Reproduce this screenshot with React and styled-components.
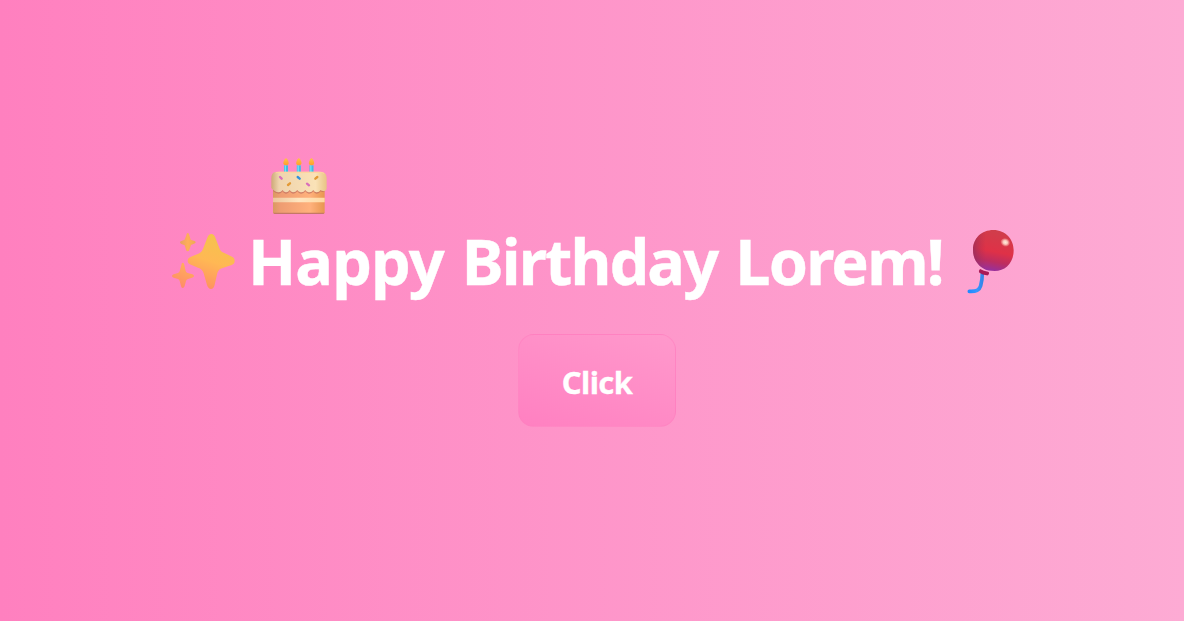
import React from "react";
import styled, { createGlobalStyle } from "styled-components";

const GlobalStyle = createGlobalStyle`
  body {
    margin: 0;
    overflow: hidden;
    font-family: "Noto Sans", "Open Sans", sans-serif;
  }
`;

const Page = styled.main`
  box-sizing: border-box;
  height: 100vh;
  min-height: 621px;
  padding-top: 152px;
  background: linear-gradient(to right, #ff80bf, #fdabd4);
  color: #fff;
`;

const Greeting = styled.section`
  display: flex;
  flex-direction: column;
  width: 860px;
  margin-left: 165px;
`;

const Emoji = styled.svg`
  display: block;
  flex: none;
  width: ${(p) => p.$w}px;
  height: ${(p) => p.$h}px;
  margin-top: ${(p) => p.$raise ? -p.$raise : 0}px;
  margin-left: ${(p) => p.$indent || 0}px;
`;

const Title = styled.h1`
  display: flex;
  align-items: flex-start;
  height: 75px;
  margin: 5px 0 0;
  font-size: 63px;
  font-weight: 700;
  line-height: 72px;
  white-space: nowrap;
`;

const TitleText = styled.span`
  box-sizing: border-box;
  width: 710px;
  padding-left: 3px;
  word-spacing: 1.6px;
  -webkit-text-stroke: 0.4px #fff;
`;

const Word = styled.span`
  letter-spacing: ${(p) => p.$tracking}px;
`;

const Button = styled.button`
  box-sizing: border-box;
  width: 158px;
  height: 93px;
  margin: 34px 0 0 353px;
  padding: 4px 0 0;
  border: 1px solid rgba(255, 128, 191, 0.55);
  border-radius: 16px;
  background: linear-gradient(20deg, #ff80c1, #ff99cc);
  color: #fff;
  font: 700 31px/1 "Noto Sans", "Open Sans", sans-serif;
  letter-spacing: -0.6px;
  -webkit-text-stroke: 0.3px #fff;
  cursor: pointer;
`;

function Cake() {
  return (
    <Emoji $w={70} $h={68} $indent={99} viewBox="0 0 210 204">
      <defs>
        <linearGradient id="sponge">
          <stop offset="0" stopColor="#d99a60" />
          <stop offset=".14" stopColor="#ee9c72" />
          <stop offset=".72" stopColor="#ffb17c" />
          <stop offset="1" stopColor="#e79650" />
        </linearGradient>
        <linearGradient id="icing">
          <stop offset="0" stopColor="#cda978" />
          <stop offset=".14" stopColor="#efd4ae" />
          <stop offset=".8" stopColor="#fae2b7" />
          <stop offset="1" stopColor="#e8c484" />
        </linearGradient>
        <linearGradient id="cream">
          <stop offset="0" stopColor="#ecc69c" />
          <stop offset=".5" stopColor="#ffe5c0" />
          <stop offset="1" stopColor="#ffd9a2" />
        </linearGradient>
        <linearGradient id="flame" x2="0" y2="1">
          <stop offset="0" stopColor="#ffc44c" />
          <stop offset="1" stopColor="#ff9d29" />
        </linearGradient>
      </defs>
      {[66, 104.5, 142.5].map((x) => (
        <g key={x}>
          <path d={`M${x - 6} 40h12v23h-12z`} fill="#40bde4" />
          <path d={`M${x - 4} 40h4v20h-4z`} fill="#75e0f2" />
          <path d={`M${x} 18c-6 5-8 11-8 16 0 4 3 6 8 6s8-2 8-6c0-5-2-11-8-16z`} fill="url(#flame)" />
        </g>
      ))}
      <path d="M27 107h155v74q0 4-4 5H31q-4-1-4-5z" fill="url(#sponge)" />
      <path d="M28 182q1 4 5 4h143q5 0 5-4z" fill="#c57866" />
      <path d="M27 137h155v14H27z" fill="url(#cream)" />
      <g transform="translate(0 4)" fill="#bd6c60" opacity=".65">
        <path d="M27 105h155v9q-7 4-12 0-5 8-13 7-7-1-9-7-5 8-14 7-7-1-10-7-5 8-14 7-7-1-10-7-5 7-13 7-7-1-10-7-5 8-12 7-7-1-9-7-5 7-12 7-11-1-17-8z" />
      </g>
      <path d="M31 61q4-2 10-2h128q12 0 17 9l2 9v34q-4 8-10 6-6 0-8-3-5 8-13 7-7-1-9-7-5 8-14 7-7-1-10-7-5 8-14 7-7-1-10-7-5 7-13 7-7-1-10-7-5 8-12 7-7-1-9-7-5 7-12 7-13-1-22-13V79q0-14 9-18z" fill="url(#icing)" />
      <path d="M35 63q4-2 10-2h122q11 0 14 4" fill="none" stroke="#ffd39b" strokeWidth="3" />
      <g fill="none" strokeWidth="7" strokeLinecap="round">
        <path d="M48 75l5 5M129 95l6 5" stroke="#d96fbb" />
        <path d="M101 75l6 5" stroke="#3291da" />
        <path d="M72 99l6-5M154 80l6-5" stroke="#e39a37" />
      </g>
    </Emoji>
  );
}

function Sparkles() {
  return (
    <Emoji $w={80} $h={75} viewBox="0 0 240 225">
      <defs>
        <linearGradient id="gold" x1=".65" y1="0" x2=".35" y2="1">
          <stop offset="0" stopColor="#f4c34c" />
          <stop offset=".5" stopColor="#ffb854" />
          <stop offset="1" stopColor="#ff8f61" />
        </linearGradient>
        <linearGradient id="smallGold" x1="0" x2="1">
          <stop offset="0" stopColor="#e99f63" />
          <stop offset=".5" stopColor="#ffae59" />
          <stop offset="1" stopColor="#eda954" />
        </linearGradient>
        <linearGradient id="lowerGold" x1=".8" y1="0" x2=".4" y2="1">
          <stop offset="0" stopColor="#ffb358" />
          <stop offset="1" stopColor="#ff8b68" />
        </linearGradient>
      </defs>
      <path d="M139 27c6 0 9 4 12 11l12 31c3 9 7 12 15 15l23 11c6 3 8 7 8 13s-3 10-9 12l-27 9c-9 3-13 7-16 15l-8 35c-2 9-6 13-11 13-6 0-10-5-12-12l-10-35c-3-10-8-14-17-17l-21-9c-7-3-10-6-10-12s4-10 10-12l22-9c8-3 12-8 15-17l12-31c3-7 6-11 12-11z" fill="url(#gold)" />
      <path d="M68 24q4 0 5 7l4 13 11 4q4 1 4 4 0 3-5 4l-9 4-5 14q-1 5-5 5t-5-5l-4-13-10-4q-4-2-4-5t4-4l10-4 5-13q1-7 4-7z" fill="url(#smallGold)" />
      <path d="M53 113q4 0 5 7l4 18q1 5 6 6l14 4q5 2 5 5t-6 5l-12 4q-5 2-6 6l-4 15q-2 6-6 6t-5-6l-4-15q-1-5-5-6l-13-4q-5-2-5-5t5-5l13-4q4-1 5-5l5-19q1-7 4-7z" fill="url(#lowerGold)" />
    </Emoji>
  );
}

function Balloon() {
  return (
    <Emoji $w={70} $h={78} $raise={3} viewBox="0 0 210 234">
      <defs>
        <linearGradient id="balloon" x1=".6" y1="0" x2=".4" y2="1">
          <stop offset="0" stopColor="#cf3e4b" />
          <stop offset=".52" stopColor="#df3147" />
          <stop offset=".76" stopColor="#bd2d60" />
          <stop offset="1" stopColor="#9430a2" />
        </linearGradient>
        <linearGradient id="shade">
          <stop offset="0" stopColor="#812e63" stopOpacity=".6" />
          <stop offset=".32" stopColor="#a92d52" stopOpacity="0" />
        </linearGradient>
        <linearGradient id="string">
          <stop offset="0" stopColor="#228aff" />
          <stop offset=".6" stopColor="#3797ff" />
          <stop offset="1" stopColor="#3585e8" />
        </linearGradient>
        <radialGradient id="shine">
          <stop offset="0" stopColor="#fff0dc" />
          <stop offset=".5" stopColor="#fac4ba" />
          <stop offset="1" stopColor="#ef8280" stopOpacity=".4" />
        </radialGradient>
      </defs>
      <path d="M82 154c0 15-2 26-5 37-4 14-13 18-34 17" fill="none" stroke="url(#string)" strokeWidth="11" strokeLinecap="round" />
      <path d="M75 141q12 6 24 8 4 0 3 6-2 6-7 5-13-1-22-8-4-5 2-11z" fill="#a91a55" />
      <path d="M115 24c37 0 61 28 61 61 0 38-25 62-57 62-13 0-24-1-35-8-18-11-30-31-30-55 0-35 26-60 61-60z" fill="url(#balloon)" />
      <path d="M115 24c37 0 61 28 61 61 0 38-25 62-57 62-13 0-24-1-35-8-18-11-30-31-30-55 0-35 26-60 61-60z" fill="url(#shade)" />
      <ellipse cx="151" cy="61" rx="14" ry="12" transform="rotate(25 151 61)" fill="url(#shine)" />
    </Emoji>
  );
}

export default function App() {
  return (
    <>
      <GlobalStyle />
      <Page>
        <Greeting>
          <Cake />
          <Title>
            <Sparkles />
            <TitleText>
              <Word $tracking={-0.9}>Happy</Word>{" "}
              <Word $tracking={-1.9}>Birthday</Word>{" "}
              <Word $tracking={-1.8}>Lorem!</Word>
            </TitleText>
            <Balloon />
          </Title>
          <Button>Click</Button>
        </Greeting>
      </Page>
    </>
  );
}
